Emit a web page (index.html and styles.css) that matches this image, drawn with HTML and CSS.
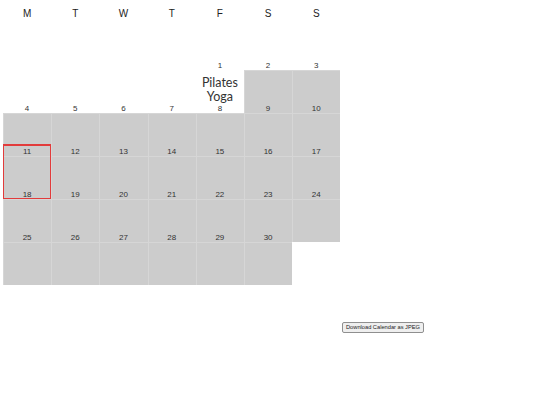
FILE: index.html
```html
<!DOCTYPE html>
<html>
<head>
<meta charset="utf-8">
<link rel="stylesheet" href="styles.css">
</head>
<body>
<div class="calendar">
  <div class="weekdays">
    <div>M</div><div>T</div><div>W</div><div>T</div><div>F</div><div>S</div><div>S</div>
  </div>
  <div class="grid">
    <div class="day empty"></div>
    <div class="day empty"></div>
    <div class="day empty"></div>
    <div class="day empty"></div>
    <div class="day"><div class="num">1</div><div class="box event"><span>Pilates</span><span>Yoga</span></div></div>
    <div class="day"><div class="num">2</div><div class="box"></div></div>
    <div class="day"><div class="num">3</div><div class="box"></div></div>

    <div class="day"><div class="num">4</div><div class="box"></div></div>
    <div class="day"><div class="num">5</div><div class="box"></div></div>
    <div class="day"><div class="num">6</div><div class="box"></div></div>
    <div class="day"><div class="num">7</div><div class="box"></div></div>
    <div class="day"><div class="num">8</div><div class="box"></div></div>
    <div class="day"><div class="num">9</div><div class="box"></div></div>
    <div class="day"><div class="num">10</div><div class="box"></div></div>

    <div class="day today"><div class="num">11</div><div class="box"></div></div>
    <div class="day"><div class="num">12</div><div class="box"></div></div>
    <div class="day"><div class="num">13</div><div class="box"></div></div>
    <div class="day"><div class="num">14</div><div class="box"></div></div>
    <div class="day"><div class="num">15</div><div class="box"></div></div>
    <div class="day"><div class="num">16</div><div class="box"></div></div>
    <div class="day"><div class="num">17</div><div class="box"></div></div>

    <div class="day"><div class="num">18</div><div class="box"></div></div>
    <div class="day"><div class="num">19</div><div class="box"></div></div>
    <div class="day"><div class="num">20</div><div class="box"></div></div>
    <div class="day"><div class="num">21</div><div class="box"></div></div>
    <div class="day"><div class="num">22</div><div class="box"></div></div>
    <div class="day"><div class="num">23</div><div class="box"></div></div>
    <div class="day"><div class="num">24</div><div class="box"></div></div>

    <div class="day"><div class="num">25</div><div class="box"></div></div>
    <div class="day"><div class="num">26</div><div class="box"></div></div>
    <div class="day"><div class="num">27</div><div class="box"></div></div>
    <div class="day"><div class="num">28</div><div class="box"></div></div>
    <div class="day"><div class="num">29</div><div class="box"></div></div>
    <div class="day"><div class="num">30</div><div class="box"></div></div>
    <div class="day empty"></div>
  </div>
</div>
<div class="actions">
  <button class="download">Download Calendar as JPEG</button>
</div>
</body>
</html>
```

FILE: styles.css
```css
html, body {
  margin: 0;
  padding: 0;
  background: #fff;
}
body {
  font-family: "Liberation Sans", Arial, sans-serif;
  color: #333;
}
.calendar {
  padding-left: 3px;
  width: 337.4px;
}
.weekdays {
  display: grid;
  grid-template-columns: repeat(7, 1fr);
  height: 28px;
  line-height: 28px;
  font-size: 10px;
  text-align: center;
  color: #222;
}
.grid {
  display: grid;
  grid-template-columns: repeat(7, 1fr);
  grid-auto-rows: 43px;
  margin-top: 42px;
}
.day {
  position: relative;
  margin-top: -12px;
  height: 55px;
  display: flex;
  flex-direction: column;
}
.num {
  height: 12px;
  box-sizing: border-box;
  padding-top: 3px;
  line-height: 10px;
  font-size: 8px;
  text-align: center;
  color: #333;
  position: relative;
  z-index: 1;
}
.box {
  height: 43px;
  box-sizing: border-box;
  background: #cccccc;
  border-left: 1px solid #d6d6d6;
  border-top: 1px solid #d6d6d6;
}
.box.event {
  background: #fff;
  border: none;
  display: flex;
  flex-direction: column;
  align-items: center;
  padding-top: 6px;
  font-family: Lato, "Open Sans", sans-serif;
  font-size: 12.5px;
  line-height: 14px;
  color: #333;
}
.today::after {
  content: "";
  position: absolute;
  inset: 0;
  border: 1px solid #e23b3b;
  border-top-width: 2px;
  z-index: 2;
}
.actions {
  padding-left: 342px;
  margin-top: 30px;
}
.download {
  font-family: "Liberation Sans", Arial, sans-serif;
  font-size: 5.7px;
  height: 11px;
  padding: 0 3px;
  line-height: 9px;
  border: 1px solid #8f8f8f;
  border-radius: 2px;
  background: #efefef;
  color: #222;
}
```
